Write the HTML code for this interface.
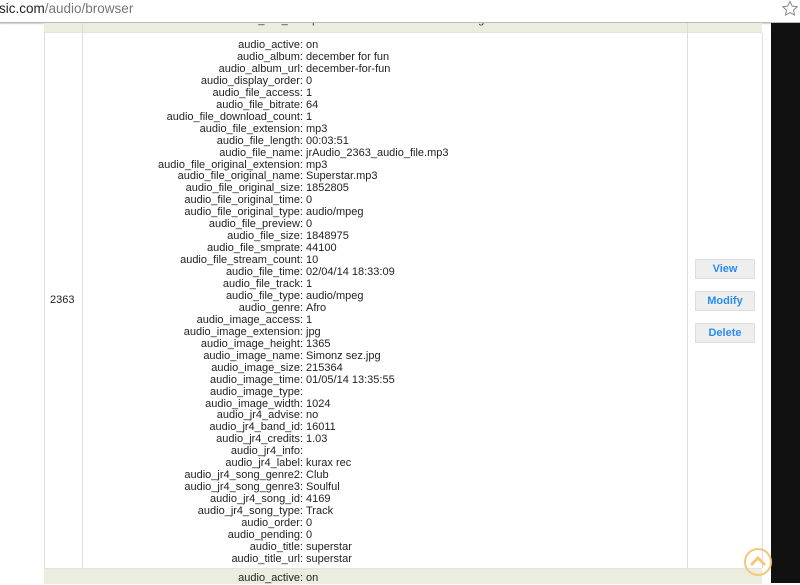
<!DOCTYPE html><html><head><style>
body{margin:0;width:800px;height:583px;overflow:hidden;background:#fff;font-family:"Liberation Sans",sans-serif;position:relative}
.a{position:absolute}
.k{position:absolute;left:84px;width:219px;text-align:right;font-size:11px;color:#222;white-space:nowrap;line-height:11.95px}
.v{position:absolute;left:306px;font-size:11px;color:#222;white-space:nowrap;line-height:11.95px}
.b{position:absolute;left:695px;width:58px;height:18px;background:#eee;border:1px solid #ddd;color:#2b8cf2;font-weight:bold;font-size:11px;text-align:center;line-height:19px}
</style></head><body>
<div class="a" style="left:0;top:0;width:800px;height:22px;background:#fff;border-bottom:1px solid #bbb;box-shadow:0 1px 1px #ccc"></div>
<div class="a" style="left:-1px;top:1px;font-size:13.5px;color:#777;line-height:16px"><span style="color:#222">sic.com</span>/audio/browser</div>
<svg class="a" style="left:781px;top:0" width="18" height="17"><path d="M9 1.5l2.2 4.6 5 .6-3.7 3.4 1 5L9 12.6 4.5 15.1l1-5L1.8 6.7l5-.6z" fill="none" stroke="#888" stroke-width="1"/></svg>
<div class="a" style="left:771px;top:23px;width:29px;height:560px;background:#111"></div>
<div class="a" style="left:44px;top:23px;width:718px;height:9px;background:#ecedde;overflow:hidden;border-bottom:1px solid #e4e4dc"><div style="position:absolute;left:40px;top:-9px;width:219px;text-align:right;font-size:11px;color:#333">audio_title_url:</div><div style="position:absolute;left:262px;top:-9px;font-size:11px;color:#333">episode 11 frckh mad live house august 6th 2010</div></div>
<div class="a" style="left:44px;top:33px;width:717px;height:535px;border-left:1px solid #ddd;border-right:1px solid #ddd"></div>
<div class="a" style="left:82px;top:23px;width:1px;height:560px;background:#ddd"></div>
<div class="a" style="left:687px;top:23px;width:1px;height:560px;background:#ddd"></div>
<div class="a" style="left:44px;top:568px;width:718px;height:15px;background:#ecedde;border-top:1px solid #e4e4dc"></div>
<div class="a" style="left:50px;top:294px;font-size:11px;color:#222">2363</div>
<div class="b" style="top:259px">View</div>
<div class="b" style="top:291px">Modify</div>
<div class="b" style="top:323px">Delete</div>
<div id="L"></div>
<div class="k" style="top:573px">audio_active:</div><div class="v" style="top:573px">on</div>
<svg class="a" style="left:743px;top:547px" width="30" height="30"><circle cx="15" cy="15" r="13" fill="none" stroke="#f8c679" stroke-width="2"/><path d="M8 18l7-7 7 7" fill="none" stroke="#f8c679" stroke-width="3"/></svg>
<script>
var d=[["audio_active","on"],["audio_album","december for fun"],["audio_album_url","december-for-fun"],["audio_display_order","0"],["audio_file_access","1"],["audio_file_bitrate","64"],["audio_file_download_count","1"],["audio_file_extension","mp3"],["audio_file_length","00:03:51"],["audio_file_name","jrAudio_2363_audio_file.mp3"],["audio_file_original_extension","mp3"],["audio_file_original_name","Superstar.mp3"],["audio_file_original_size","1852805"],["audio_file_original_time","0"],["audio_file_original_type","audio/mpeg"],["audio_file_preview","0"],["audio_file_size","1848975"],["audio_file_smprate","44100"],["audio_file_stream_count","10"],["audio_file_time","02/04/14 18:33:09"],["audio_file_track","1"],["audio_file_type","audio/mpeg"],["audio_genre","Afro"],["audio_image_access","1"],["audio_image_extension","jpg"],["audio_image_height","1365"],["audio_image_name","Simonz sez.jpg"],["audio_image_size","215364"],["audio_image_time","01/05/14 13:35:55"],["audio_image_type",""],["audio_image_width","1024"],["audio_jr4_advise","no"],["audio_jr4_band_id","16011"],["audio_jr4_credits","1.03"],["audio_jr4_info",""],["audio_jr4_label","kurax rec"],["audio_jr4_song_genre2","Club"],["audio_jr4_song_genre3","Soulful"],["audio_jr4_song_id","4169"],["audio_jr4_song_type","Track"],["audio_order","0"],["audio_pending","0"],["audio_title","superstar"],["audio_title_url","superstar"]];
var h="";for(var i=0;i<d.length;i++){var t=(40+i*11.95).toFixed(2);h+='<div class="k" style="top:'+t+'px">'+d[i][0]+':</div><div class="v" style="top:'+t+'px">'+d[i][1]+'</div>';}
document.getElementById("L").innerHTML=h;
</script>
</body></html>
